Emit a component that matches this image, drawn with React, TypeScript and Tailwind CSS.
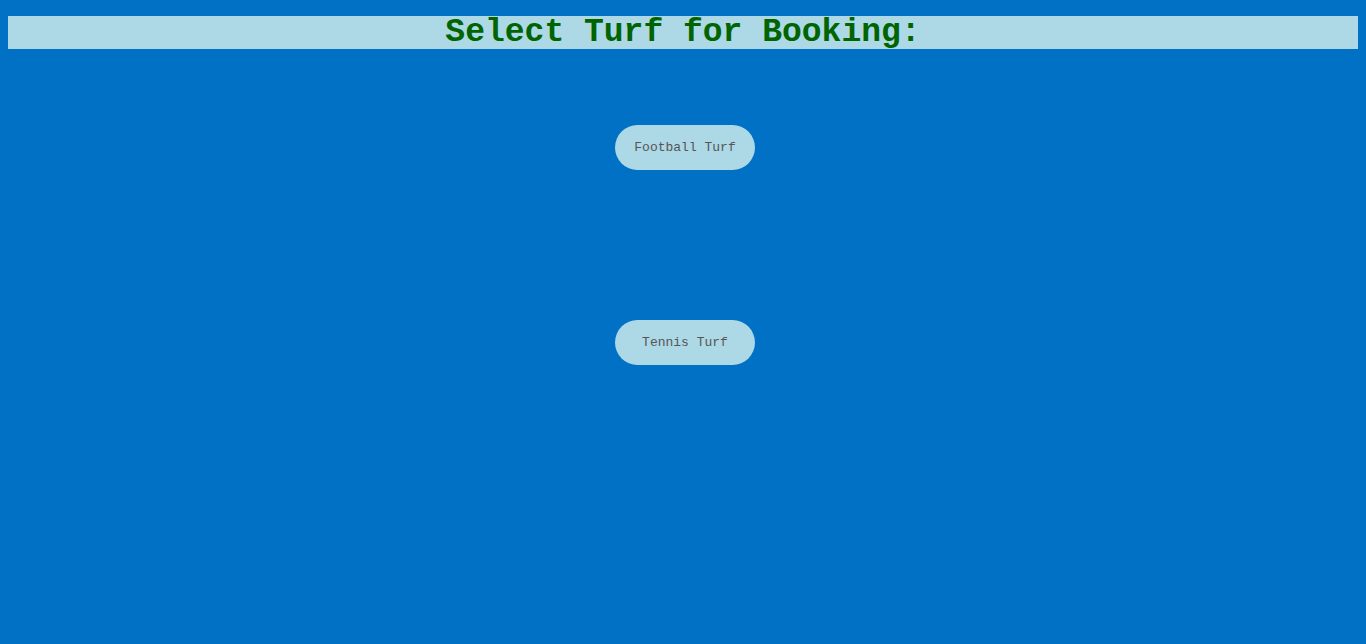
export default function App() {
  const turfs = ["Football Turf", "Tennis Turf"]

  return (
    <div className="min-h-[644px] bg-[#0071c5] px-2 pt-4 font-['Liberation_Mono',monospace]">
      <h1 className="bg-[#add8e6] text-center text-[33px] font-bold leading-[33px] text-[#006400]">
        Select Turf for Booking:
      </h1>

      <div className="flex flex-col items-center gap-[150px] pt-[76px] pl-1">
        {turfs.map((turf) => (
          <button
            key={turf}
            type="button"
            className="h-[45px] w-[140px] rounded-full bg-[#add8e6] text-[13px] text-[#555]"
          >
            {turf}
          </button>
        ))}
      </div>
    </div>
  )
}
